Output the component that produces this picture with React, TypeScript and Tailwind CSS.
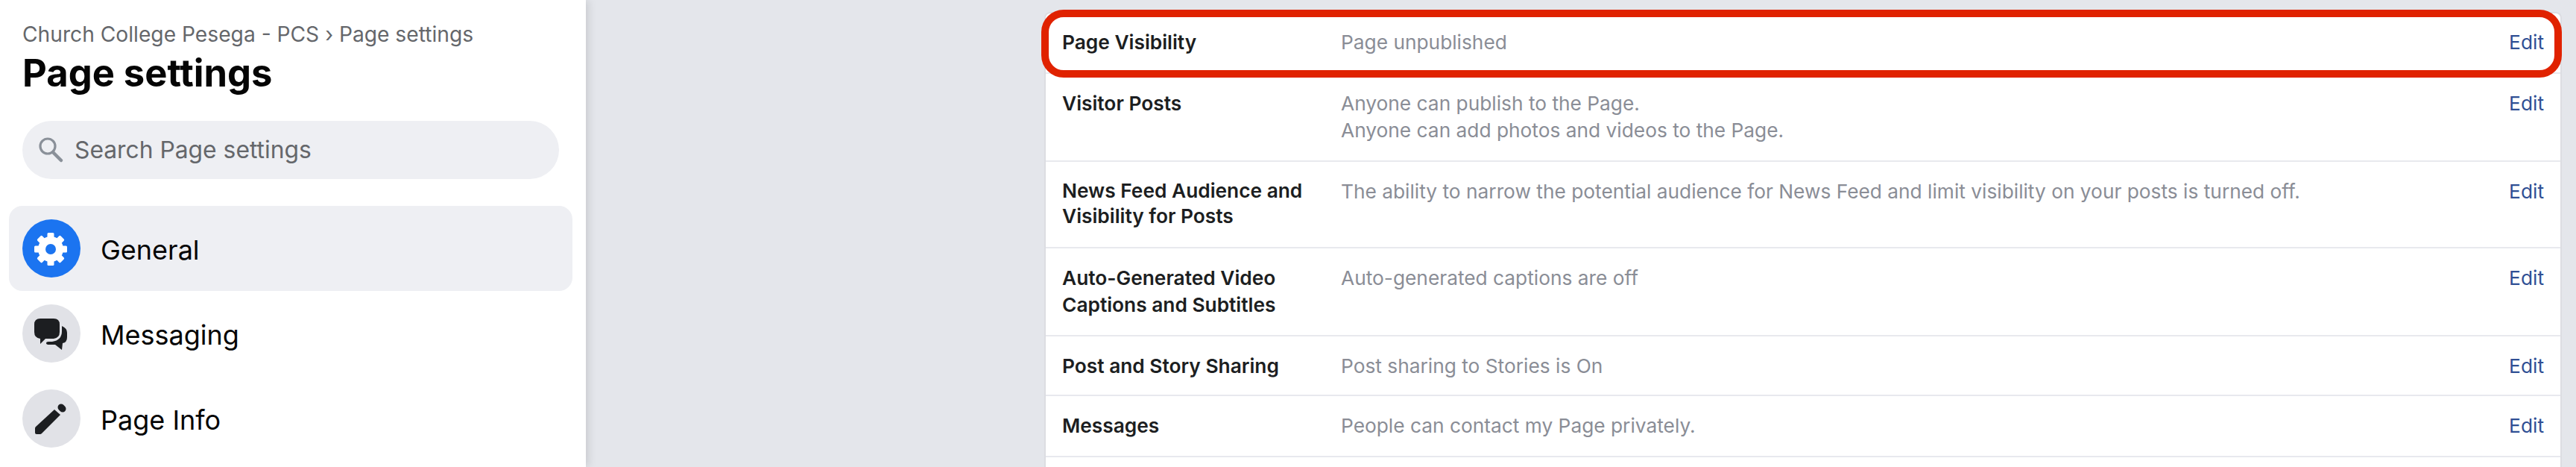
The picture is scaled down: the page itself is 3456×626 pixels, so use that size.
const rows = [
  { label: ["Page Visibility"], desc: ["Page unpublished"], cls: "h-[81px] pt-[21px]", labelCls: "" },
  { label: ["Visitor Posts"], desc: ["Anyone can publish to the Page.", "Anyone can add photos and videos to the Page."], cls: "h-[118px] pt-[22px]", labelCls: "" },
  { label: ["News Feed Audience and", "Visibility for Posts"], desc: ["The ability to narrow the potential audience for News Feed and limit visibility on your posts is turned off."], cls: "h-[116px] pt-[22px]", labelCls: "leading-[34px]" },
  { label: ["Auto-Generated Video", "Captions and Subtitles"], desc: ["Auto-generated captions are off"], cls: "h-[118px] pt-[22px]", labelCls: "" },
  { label: ["Post and Story Sharing"], desc: ["Post sharing to Stories is On"], cls: "h-[80px] pt-[22px]", labelCls: "" },
  { label: ["Messages"], desc: ["People can contact my Page privately."], cls: "h-[82px] pt-[22px]", labelCls: "" },
];

const gearTeeth = [0, 45, 90, 135, 180, 225, 270, 315];

function NavItem({ label, active, children }: { label: string; active?: boolean; children: React.ReactNode }) {
  return (
    <div className={`flex items-center h-[114px] px-[18px] rounded-[18px] ${active ? "bg-[#eeeff3]" : ""}`}>
      <div className={`flex items-center justify-center w-[78px] h-[78px] rounded-full ${active ? "bg-[#1b74f0]" : "bg-[#e1e2e7]"}`}>
        {children}
      </div>
      <span className="ml-[27px] pt-[3px] text-[36px] text-[#050505]">{label}</span>
    </div>
  );
}

export default function App() {
  return (
    <div className="flex h-[626px] overflow-hidden bg-[#e4e6eb] font-['Inter',sans-serif]">
      <aside className="w-[786px] shrink-0 bg-white shadow-[2px_0_12px_rgba(0,0,0,0.14)] pl-[12px] pr-[18px]">
        <div className="px-[18px] pt-[27px]">
          <div className="text-[28.2px] leading-[38px] text-[#65676b]">Church College Pesega - PCS › Page settings</div>
          <h1 className="mt-[2px] text-[50.7px] leading-[62px] font-bold text-[#050505]">Page settings</h1>
          <div className="mt-[33px] flex items-center h-[78px] w-[720px] rounded-full bg-[#eeeff3] px-[22px]">
            <svg width="36" height="36" viewBox="0 0 36 36" fill="none" stroke="#8a9099" strokeWidth="3.2">
              <circle cx="12" cy="13" r="10" />
              <path d="M19 21l11 11" strokeWidth="4.5" strokeLinecap="round" />
            </svg>
            <span className="ml-[12px] text-[31.8px] text-[#65676b]">Search Page settings</span>
          </div>
        </div>
        <nav className="mt-[36px]">
          <NavItem label="General" active>
            <svg width="78" height="78" viewBox="6 4 78 78" fill="#ffffff">
              {gearTeeth.map((deg) => (
                <rect key={deg} x="39.5" y="22" width="9" height="10" rx="1.5" transform={`rotate(${deg} 44 44)`} />
              ))}
              <circle cx="44" cy="44" r="17" />
              <circle cx="44" cy="44" r="7" fill="#1b74f0" />
            </svg>
          </NavItem>
          <NavItem label="Messaging">
            <svg width="78" height="78" viewBox="6 4 78 78" fill="#1c1e21">
              <path d="M30 23H48Q56 23 56 31V41Q56 49 48 50H37L30 57V50Q22 49 22 41V31Q22 23 30 23Z" />
              <path d="M59 33Q66 36 66 42V48Q66 55 60 56L59 65L50 58H42Q38 58 38 56Q38 54 41 54H46Q59 52 59 40Z" />
            </svg>
          </NavItem>
          <NavItem label="Page Info">
            <svg width="78" height="78" viewBox="6 4 78 78" fill="#1c1e21">
              <path d="M49 31L57 38L32 63Q31 64 30 64H25Q23 64 23 62V56Q23 55 24 54Z" />
              <path d="M58 28L60 30" stroke="#1c1e21" strokeWidth="9" strokeLinecap="round" />
            </svg>
          </NavItem>
        </nav>
      </aside>
      <main className="flex-1 pl-[615px] pr-[19px] pt-[16px]">
        <div className="relative h-[700px] rounded-t-[8px] border-x-2 border-t-2 border-[#dcdde2] bg-white">
          {rows.map((row) => (
            <div key={row.label[0]} className={`flex pl-[22px] pr-[22px] border-b-2 border-[#e8e9ee] text-[26.3px] leading-[36px] ${row.cls}`}>
              <div className={`w-[374px] shrink-0 font-semibold text-[#1c1e21] ${row.labelCls}`}>
                {row.label.map((l) => <div key={l}>{l}</div>)}
              </div>
              <div className="flex-1 text-[#8a8d96]">
                {row.desc.map((d) => <div key={d}>{d}</div>)}
              </div>
              <span className="text-[#2f4f94]">Edit</span>
            </div>
          ))}
          <div className="absolute left-[-6px] right-[-2px] top-[-5px] h-[91px] rounded-[30px] border-[10px] border-[#e02200]" />
        </div>
      </main>
    </div>
  );
}
